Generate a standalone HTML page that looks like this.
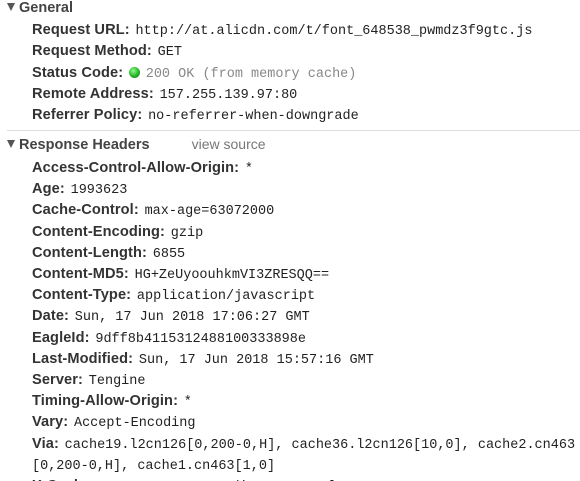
<!DOCTYPE html>
<html><head><style>
html,body{margin:0;width:580px;height:481px;overflow:hidden;background:#fff}
#w{position:relative;width:580px;height:481px;overflow:hidden;font-family:"Liberation Sans",sans-serif;color:#303030}
.h{position:absolute;left:7px;font-weight:bold;font-size:14.5px;color:#444;white-space:nowrap}
.h:before{content:"";display:inline-block;border-left:4.5px solid transparent;border-right:4.5px solid transparent;border-top:8px solid #555;margin-right:4px;vertical-align:1px}
.r{position:absolute;left:32px;white-space:nowrap;font-size:13.5px;line-height:21px}
.r b{color:#333;font-size:14.6px;letter-spacing:0.1px}
.r span{font-family:"Liberation Mono",monospace;font-size:13.5px;color:#222;margin-left:2px}
.g{color:#888!important}
.dot{display:inline-block;width:11px;height:11px;border-radius:50%;background:radial-gradient(circle at 40% 35%,#8f8,#2a2 60%,#181);vertical-align:-1px;margin-left:2px}
.sep{position:absolute;left:7px;right:0;top:130px;border-top:1px solid #ddd}
</style></head><body><div id="w">
<div class="h" style="top:0px">General</div>
<div class="r" style="top:19px"><b>Request URL:</b> <span>http://at.alicdn.com/t/font_648538_pwmdz3f9gtc.js</span></div>
<div class="r" style="top:40px"><b>Request Method:</b> <span>GET</span></div>
<div class="r" style="top:62px"><b>Status Code:</b> <i class="dot"></i> <span class="g">200 OK (from memory cache)</span></div>
<div class="r" style="top:83px"><b>Remote Address:</b> <span>157.255.139.97:80</span></div>
<div class="r" style="top:104px"><b>Referrer Policy:</b> <span>no-referrer-when-downgrade</span></div>
<div class="sep"></div>
<div class="h" style="top:136px">Response Headers <span style="font-weight:normal;color:#777;margin-left:38px;font-size:14px">view source</span></div>
<div class="r" style="top:157px"><b>Access-Control-Allow-Origin:</b> <span>*</span></div>
<div class="r" style="top:178px"><b>Age:</b> <span>1993623</span></div>
<div class="r" style="top:199px"><b>Cache-Control:</b> <span>max-age=63072000</span></div>
<div class="r" style="top:221px"><b>Content-Encoding:</b> <span>gzip</span></div>
<div class="r" style="top:242px"><b>Content-Length:</b> <span>6855</span></div>
<div class="r" style="top:263px"><b>Content-MD5:</b> <span>HG+ZeUyoouhkmVI3ZRESQQ==</span></div>
<div class="r" style="top:284px"><b>Content-Type:</b> <span>application/javascript</span></div>
<div class="r" style="top:305px"><b>Date:</b> <span>Sun, 17 Jun 2018 17:06:27 GMT</span></div>
<div class="r" style="top:327px"><b>EagleId:</b> <span>9dff8b4115312488100333898e</span></div>
<div class="r" style="top:348px"><b>Last-Modified:</b> <span>Sun, 17 Jun 2018 15:57:16 GMT</span></div>
<div class="r" style="top:369px"><b>Server:</b> <span>Tengine</span></div>
<div class="r" style="top:390px"><b>Timing-Allow-Origin:</b> <span>*</span></div>
<div class="r" style="top:411px"><b>Vary:</b> <span>Accept-Encoding</span></div>
<div class="r" style="top:433px"><b>Via:</b> <span>cache19.l2cn126[0,200-0,H], cache36.l2cn126[10,0], cache2.cn463</span></div>
<div class="r" style="top:454px"><span style="margin-left:0">[0,200-0,H], cache1.cn463[1,0]</span></div>
<div class="r" style="top:475px"><b>X-Cache:</b> <span>HIT TCP_MEM_HIT dirn:-2:-2 mlen:0</span></div>
</div></body></html>
